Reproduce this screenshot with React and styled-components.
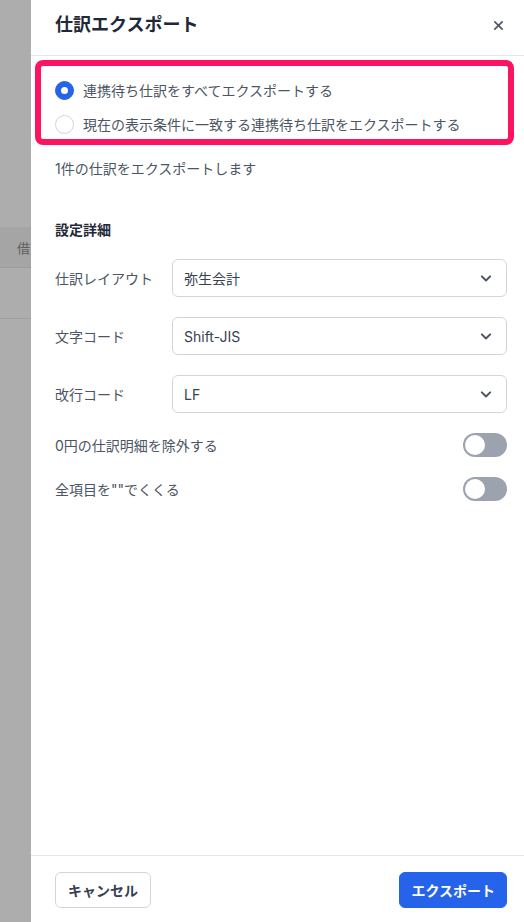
import React from "react";
import styled, { createGlobalStyle } from "styled-components";

const Global = createGlobalStyle`
  html, body { margin: 0; padding: 0; }
  body {
    font-family: Inter, "Noto Sans CJK JP", "Noto Sans", sans-serif;
    -webkit-font-smoothing: antialiased;
  }
  * { box-sizing: border-box; }
`;

const Page = styled.div`
  display: flex;
  width: 524px;
  height: 922px;
  overflow: hidden;
`;

const Backdrop = styled.div`
  width: 31px;
  flex: none;
  background: #adadad;
  display: flex;
  flex-direction: column;
  padding-top: 227px;
  overflow: hidden;
`;

const BackdropHead = styled.div`
  height: 41px;
  background: #a5a5a5;
  border-bottom: 1px solid #9c9c9c;
  display: flex;
  align-items: center;
  padding-left: 17px;
  font-size: 13px;
  color: #5e5e5e;
  white-space: nowrap;
`;

const BackdropRow = styled.div`
  height: 51px;
  border-bottom: 1px solid #a0a0a0;
`;

const Panel = styled.div`
  position: relative;
  flex: 1;
  background: #fff;
  display: flex;
  flex-direction: column;
`;

const Header = styled.div`
  height: 56px;
  flex: none;
  display: flex;
  align-items: flex-start;
  justify-content: space-between;
  padding: 13px 17px 0 24px;
  border-bottom: 1px solid #e5e7eb;
`;

const Title = styled.h2`
  margin: 0;
  font-size: 18px;
  line-height: 24px;
  font-weight: 700;
  color: #1f2937;
`;

const CloseButton = styled.button`
  border: none;
  background: none;
  padding: 0;
  margin: 5px 2px 0 0;
  width: 14px;
  height: 14px;
  display: flex;
  align-items: center;
  justify-content: center;
  color: #4b5563;
  cursor: pointer;
`;

const Body = styled.div`
  flex: 1;
  display: flex;
  flex-direction: column;
  padding: 24px 17px 0 24px;
`;

const RadioList = styled.div`
  display: flex;
  flex-direction: column;
  gap: 14px;
`;

const RadioRow = styled.label`
  display: flex;
  align-items: center;
  gap: 9px;
  height: 20px;
  font-size: 14px;
  color: #4b5563;
  cursor: pointer;
`;

const RadioDot = styled.span`
  width: 19px;
  height: 19px;
  flex: none;
  border-radius: 50%;
  background: ${(p) => (p.$checked ? "#2563eb" : "#fff")};
  border: 1px solid ${(p) => (p.$checked ? "#2563eb" : "#d1d5db")};
  display: flex;
  align-items: center;
  justify-content: center;
  &::after {
    content: "";
    display: ${(p) => (p.$checked ? "block" : "none")};
    width: 7px;
    height: 7px;
    border-radius: 50%;
    background: #fff;
  }
`;

const Note = styled.p`
  margin: 25px 0 0;
  font-size: 14px;
  line-height: 20px;
  color: #4b5563;
`;

const SectionTitle = styled.h3`
  margin: 41px 0 0;
  font-size: 14px;
  line-height: 20px;
  font-weight: 700;
  color: #1f2937;
`;

const Fields = styled.div`
  margin-top: 19px;
  display: flex;
  flex-direction: column;
  gap: 20px;
`;

const FieldRow = styled.div`
  display: grid;
  grid-template-columns: 117px 1fr;
  align-items: center;
`;

const FieldLabel = styled.span`
  font-size: 14px;
  color: #4b5563;
`;

const Select = styled.div`
  height: 38px;
  border: 1px solid #d1d5db;
  border-radius: 6px;
  display: flex;
  align-items: center;
  justify-content: space-between;
  padding: 0 10px 0 11px;
  font-size: 14px;
  color: #374151;
  background: #fff;
`;

const ToggleRow = styled.div`
  display: flex;
  align-items: center;
  justify-content: space-between;
  height: 24px;
  font-size: 14px;
  color: #4b5563;
`;

const Toggle = styled.span`
  width: 44px;
  height: 24px;
  border-radius: 12px;
  background: ${(p) => (p.$on ? "#2563eb" : "#9ca3af")};
  display: flex;
  align-items: center;
  justify-content: ${(p) => (p.$on ? "flex-end" : "flex-start")};
  padding: 2px;
  &::after {
    content: "";
    width: 20px;
    height: 20px;
    border-radius: 50%;
    background: #fff;
  }
`;

const Footer = styled.div`
  flex: none;
  height: 67px;
  border-top: 1px solid #e5e7eb;
  display: flex;
  justify-content: space-between;
  align-items: flex-start;
  padding: 16px 17px 0 24px;
`;

const Button = styled.button`
  height: 36px;
  padding: 0 ${(p) => (p.$primary ? "11px" : "12px")};
  border-radius: 6px;
  font-family: inherit;
  font-size: 14px;
  font-weight: 700;
  border: 1px solid ${(p) => (p.$primary ? "#2563eb" : "#d1d5db")};
  background: ${(p) => (p.$primary ? "#2563eb" : "#fff")};
  color: ${(p) => (p.$primary ? "#fff" : "#374151")};
  cursor: pointer;
`;

const Annotation = styled.div`
  position: absolute;
  left: 4px;
  top: 60px;
  width: 479px;
  height: 85px;
  border: 6px solid #fd1461;
  border-radius: 8px;
  pointer-events: none;
`;

const Chevron = () => (
  <svg width="20" height="20" viewBox="0 0 24 24" fill="none" stroke="#4b5563" strokeWidth="2.4" strokeLinecap="round" strokeLinejoin="round">
    <path d="M7 10l5 5 5-5" />
  </svg>
);

const selects = [
  { label: "仕訳レイアウト", value: "弥生会計" },
  { label: "文字コード", value: "Shift-JIS" },
  { label: "改行コード", value: "LF" },
];

const toggles = ["0円の仕訳明細を除外する", "全項目を\"\"でくくる"];

export default function App() {
  return (
    <>
      <Global />
      <Page>
        <Backdrop>
          <BackdropHead>借方</BackdropHead>
          <BackdropRow />
        </Backdrop>
        <Panel>
          <Header>
            <Title>仕訳エクスポート</Title>
            <CloseButton aria-label="close">
              <svg width="11" height="11" viewBox="0 0 12 12" stroke="currentColor" strokeWidth="1.8" strokeLinecap="round">
                <path d="M2 2l8 8M10 2l-8 8" />
              </svg>
            </CloseButton>
          </Header>
          <Body>
            <RadioList>
              <RadioRow>
                <RadioDot $checked />
                連携待ち仕訳をすべてエクスポートする
              </RadioRow>
              <RadioRow>
                <RadioDot />
                現在の表示条件に一致する連携待ち仕訳をエクスポートする
              </RadioRow>
            </RadioList>
            <Note>1件の仕訳をエクスポートします</Note>
            <SectionTitle>設定詳細</SectionTitle>
            <Fields>
              {selects.map((s) => (
                <FieldRow key={s.label}>
                  <FieldLabel>{s.label}</FieldLabel>
                  <Select>
                    <span>{s.value}</span>
                    <Chevron />
                  </Select>
                </FieldRow>
              ))}
              {toggles.map((t) => (
                <ToggleRow key={t}>
                  <span>{t}</span>
                  <Toggle />
                </ToggleRow>
              ))}
            </Fields>
          </Body>
          <Footer>
            <Button>キャンセル</Button>
            <Button $primary>エクスポート</Button>
          </Footer>
          <Annotation />
        </Panel>
      </Page>
    </>
  );
}
